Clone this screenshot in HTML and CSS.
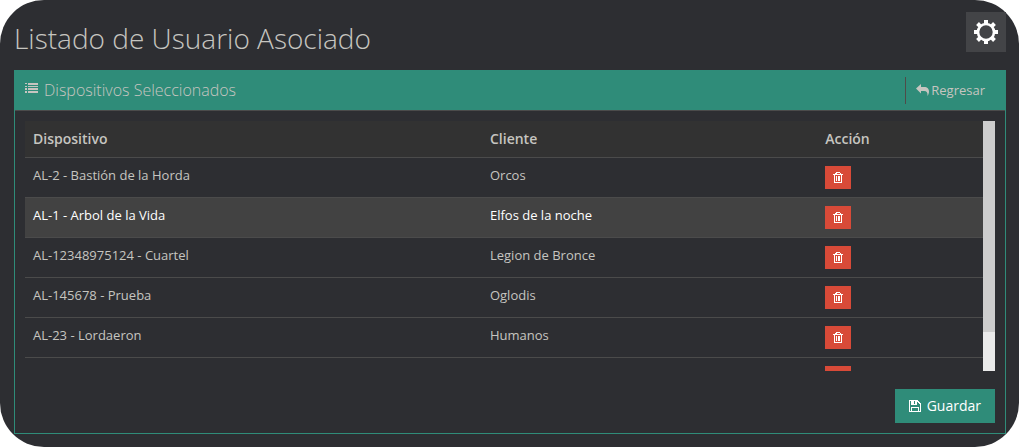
FILE: index.html
```html
<!DOCTYPE html>
<html lang="es">
<head>
<meta charset="utf-8">
<title>Listado de Usuario Asociado</title>
<link rel="stylesheet" href="styles.css">
</head>
<body>
<svg class="sprite" aria-hidden="true">
  <symbol id="trash" viewBox="0 0 10 11" shape-rendering="crispEdges">
    <path d="M3 0h4v1h1v1h2v1H9v8H1V3H0V2h2V1h1zM4 1v1h3V1zM2 3v7h6V3zM3 4h1v5H3zM5 4h2v5H5z" fill="currentColor" fill-rule="evenodd"/>
  </symbol>
</svg>
<main class="page">
  <header class="top">
    <h1 class="title">Listado de Usuario Asociado</h1>
    <button class="settings" type="button" aria-label="Configuración">
      <svg width="24" height="24" viewBox="0 0 24 24"><g fill="currentColor"><path id="tooth" d="M10 0h4v4h-4z"/><use href="#tooth" transform="rotate(45 12 12)"/><use href="#tooth" transform="rotate(90 12 12)"/><use href="#tooth" transform="rotate(135 12 12)"/><use href="#tooth" transform="rotate(180 12 12)"/><use href="#tooth" transform="rotate(225 12 12)"/><use href="#tooth" transform="rotate(270 12 12)"/><use href="#tooth" transform="rotate(315 12 12)"/></g><circle cx="12" cy="12" r="8" fill="none" stroke="currentColor" stroke-width="2.6"/></svg>
    </button>
  </header>
  <section class="panel">
    <div class="panel-head">
      <h2 class="panel-title">
        <svg width="13" height="10" viewBox="0 0 13 10" shape-rendering="crispEdges"><path d="M0 0h2v1H0zM3 0h10v2H3zM0 3h2v1H0zM3 3h10v1H3zM0 5h2v2H0zM3 5h10v2H3zM0 8h2v2H0zM3 8h10v2H3z" fill="currentColor"/></svg>
        Dispositivos Seleccionados
      </h2>
      <a class="back" href="#">
        <svg width="13" height="12" viewBox="0 0 13 12"><path d="M0 4.500L5 0v3h3c3.500 0 5 1.800 5 4.600 0 1.700-.6 3.100-1.500 4.400.3-3.400-.7-5-3.500-5H5v2.500z" fill="currentColor"/></svg>
        Regresar
      </a>
    </div>
    <div class="panel-body">
      <div class="scroll-area">
        <div class="scroller" tabindex="0">
          <table class="devices">
            <thead><tr><th class="col-device">Dispositivo</th><th class="col-client">Cliente</th><th>Acción</th></tr></thead>
            <tbody>
              <tr><td>AL-2 - Bastión de la Horda</td><td>Orcos</td><td><button class="remove" type="button" aria-label="Eliminar"><svg width="10" height="11"><use href="#trash"/></svg></button></td></tr>
              <tr class="active"><td>AL-1 - Arbol de la Vida</td><td>Elfos de la noche</td><td><button class="remove" type="button" aria-label="Eliminar"><svg width="10" height="11"><use href="#trash"/></svg></button></td></tr>
              <tr><td>AL-12348975124 - Cuartel</td><td>Legion de Bronce</td><td><button class="remove" type="button" aria-label="Eliminar"><svg width="10" height="11"><use href="#trash"/></svg></button></td></tr>
              <tr><td>AL-145678 - Prueba</td><td>Oglodis</td><td><button class="remove" type="button" aria-label="Eliminar"><svg width="10" height="11"><use href="#trash"/></svg></button></td></tr>
              <tr><td>AL-23 - Lordaeron</td><td>Humanos</td><td><button class="remove" type="button" aria-label="Eliminar"><svg width="10" height="11"><use href="#trash"/></svg></button></td></tr>
              <tr><td></td><td></td><td><button class="remove" type="button" aria-label="Eliminar"><svg width="10" height="11"><use href="#trash"/></svg></button></td></tr>
            </tbody>
          </table>
        </div>
        <div class="track" aria-hidden="true"><div class="thumb"></div></div>
      </div>
      <div class="actions">
        <button class="save" type="button">
          <svg width="12" height="12" viewBox="0 0 12 12" shape-rendering="crispEdges"><path d="M0 0h9v1h1v1h1v1h1v9H0zM1 1v10h1V7h8v4h1V4h-1V3H9V2H8v3H2V1zM3 8v3h6V8zM5 1v3h1V1z" fill="currentColor" fill-rule="evenodd"/></svg>
          Guardar
        </button>
      </div>
    </div>
  </section>
</main>
</body>
</html>
```
FILE: styles.css
```css
* { box-sizing: border-box; }

body {
  margin: 0;
  background: #fff;
  color: #c6c5c0;
  font: 13px/18px "Open Sans", "Noto Sans", sans-serif;
}

.sprite { position: absolute; width: 0; height: 0; }

svg { display: block; flex: none; }

button { border: 0; font: inherit; cursor: pointer; }

.page {
  min-height: 100vh;
  padding: 12px 13px 13px 14px;
  border-radius: 44px;
  background: #2d2e32;
}

.top {
  display: flex;
  align-items: flex-start;
  justify-content: space-between;
  margin-bottom: 18px;
}

.title {
  margin: 0;
  padding-top: 6px;
  font-size: 28px;
  line-height: 40px;
  font-weight: 300;
  height: 40px;
}

.settings {
  display: grid;
  place-items: center;
  width: 40px;
  height: 40px;
  padding: 0;
  background: #434447;
  color: #fff;
}

.panel { border: 1px solid #2f8c79; }

.panel-head {
  display: flex;
  align-items: center;
  justify-content: space-between;
  height: 40px;
  padding: 0 20px 0 10px;
  border-bottom: 1px solid #4b4b4b;
  background: #2f8c79;
}

.panel-title {
  display: flex;
  align-items: flex-start;
  gap: 6px;
  margin: 0;
  padding-bottom: 2px;
  font-size: 16px;
  line-height: 20px;
  font-weight: 300;
}

.panel-title svg { margin-top: 3px; }

.back {
  display: flex;
  align-items: center;
  gap: 2px;
  height: 27px;
  padding: 0 0 2px 10px;
  border-left: 1px solid #4f4b49;
  color: inherit;
  text-decoration: none;
}

.panel-body { padding: 10px; }

.scroll-area { display: flex; height: 250px; }

.scroller { flex: 1; overflow-y: scroll; scrollbar-width: none; }

.track { width: 12px; background: #eaeaea; }
.thumb { height: 84.4%; background: #cdcdcd; }

.devices {
  width: 100%;
  margin-bottom: 20px;
  border-collapse: separate;
  border-spacing: 0;
  table-layout: fixed;
}

.col-device { width: 47.7%; }
.col-client { width: 35%; }

.devices th {
  height: 36px;
  padding: 8px;
  background: #323232;
  font-size: 14px;
  font-weight: 600;
  text-align: left;
}

.devices td {
  height: 40px;
  padding: 8px;
  border-top: 1px solid #4b4b4b;
  vertical-align: top;
}

.active td { background: #424242; color: #fff; }

.remove {
  display: grid;
  place-items: center;
  width: 26px;
  height: 23px;
  padding: 0;
  background: #d84a38;
  color: #fff;
}

.actions {
  display: flex;
  justify-content: flex-end;
  margin-top: 18px;
}

.save {
  display: flex;
  align-items: center;
  gap: 6px;
  height: 34px;
  padding: 0 14px;
  background: #2f8c79;
  color: #fff;
  font-size: 14px;
}
```
